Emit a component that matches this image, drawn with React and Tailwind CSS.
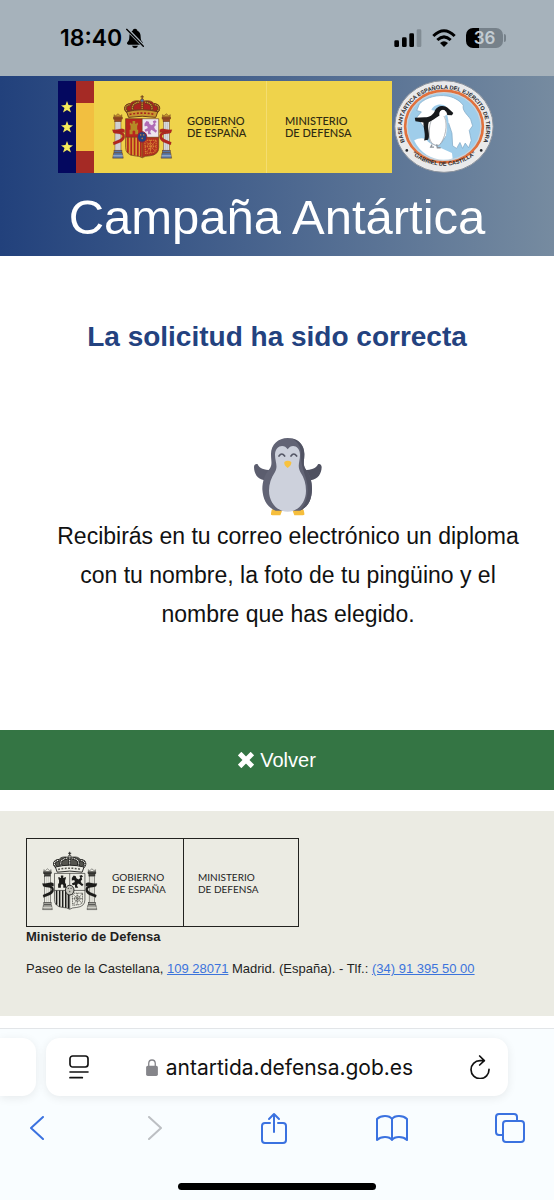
const COLOUR_ARMS = {
  line: '#6b3a1c', crown: '#c9962f', crownCap: '#a8231f', column: '#d8dbe0', base: '#5677a8',
  capital: '#9c4a24', ribbon: '#b3261f', q1: '#b8261f', castle: '#b58a26', q2: '#eee6ee', lion: '#b06cb4',
  q3: '#d9a02e', bars: '#b3261f', q4: '#b3301f', chain: '#d98a34', oval: '#27407f', ovalRim: '#a02030',
};

const MONO_ARMS = {
  line: '#1c1c1a', crown: '#ebebe3', crownCap: '#55554f', column: '#ebebe3', base: '#a5a59e',
  capital: '#44443f', ribbon: '#1c1c1a', q1: '#ebebe3', castle: '#1c1c1a', q2: '#ebebe3', lion: '#1c1c1a',
  q3: '#ebebe3', bars: '#1c1c1a', q4: '#ebebe3', chain: '#55554f', oval: '#c4c4bc', ovalRim: '#1c1c1a',
};

function Pillar({ c }) {
  return (
    <g stroke={c.line} strokeWidth="1.5">
      <path d="M7 66 L6 59 L11 62 L18 56 L25 62 L30 59 L29 66 Z" fill={c.crown} />
      <rect x="5" y="66" width="26" height="6" fill={c.capital} />
      <rect x="8" y="72" width="20" height="8" fill={c.capital} />
      <rect x="9" y="80" width="18" height="88" fill={c.column} />
      <path d="M15 82 V166 M21 82 V166" strokeWidth="1" opacity=".4" />
      <rect x="6" y="166" width="24" height="8" fill={c.base} />
      <path d="M2 190 L5 174 H31 L34 190 Z" fill={c.base} />
      <path d="M3 183 H33" strokeWidth="2" stroke={c.column} />
      <path
        d="M38 104 C30 98 20 104 10 104 L1 104 L4 113 C14 118 22 114 30 120 C34 124 30 130 22 134 L3 142 L5 150 L26 142 C38 136 41 126 37 117 C33 110 20 110 12 109 C24 110 32 112 38 113 Z"
        fill={c.ribbon}
        strokeWidth=".5"
      />
    </g>
  );
}

function CoatOfArms({ c, className }) {
  return (
    <svg viewBox="0 0 184 192" className={className} aria-hidden="true">
      <Pillar c={c} />
      <g transform="matrix(-1 0 0 1 182 0)">
        <Pillar c={c} />
      </g>

      {/* crown */}
      <path d="M47 54 C32 44 36 26 56 25 C62 16 76 15 91 19 C106 15 120 16 126 25 C146 26 150 44 135 54 Z" fill={c.crownCap} stroke={c.line} strokeWidth="2" />
      <g fill="none" stroke={c.line} strokeWidth="8">
        <path d="M50 52 C36 44 38 30 56 28 M68 52 C56 40 60 24 82 21 M114 52 C126 40 122 24 100 21 M132 52 C146 44 144 30 126 28 M91 20 V52" />
      </g>
      <g fill="none" stroke={c.crown} strokeWidth="4" strokeDasharray="4 2">
        <path d="M50 52 C36 44 38 30 56 28 M68 52 C56 40 60 24 82 21 M114 52 C126 40 122 24 100 21 M132 52 C146 44 144 30 126 28 M91 20 V52" />
      </g>
      <path d="M44 50 Q91 38 138 50 L132 67 Q91 60 50 67 Z" fill={c.crown} stroke={c.line} strokeWidth="3" />
      <path d="M53 58 Q91 50 129 58" fill="none" stroke={c.crownCap} strokeWidth="5" strokeDasharray="6 5" />
      <circle cx="91" cy="16" r="5" fill={c.base} stroke={c.line} strokeWidth="2" />
      <path d="M91 0 V12 M86 5 H96" stroke={c.line} strokeWidth="3" />

      {/* shield */}
      <path d="M41 71 H91 V127 H41 Z" fill={c.q1} />
      <path d="M91 71 H141 V127 H91 Z" fill={c.q2} />
      <path d="M41 127 H91 V188 Q83 183 68 183 Q41 180 41 158 Z" fill={c.q3} />
      <path d="M91 127 H141 V158 Q141 180 114 183 Q99 183 91 188 Z" fill={c.q4} />
      <path d="M48 127 V174 M58 127 V181 M68 127 V182 M78 127 V184 M87 127 V186" stroke={c.bars} strokeWidth="5" />
      <path d="M53 118 V104 H56 V91 H54 V83 H58 V86 H62 V78 H70 V86 H74 V83 H78 V91 H76 V104 H79 V118 H70 V109 Q66 104 62 109 V118 Z" fill={c.castle} />
      <path
        d="M98 86 L104 78 L111 80 L113 87 L120 91 L126 86 L123 79 L130 76 L135 81 L130 84 L132 91 L127 96 L130 103 L136 107 L132 113 L124 107 L118 104 L115 111 L119 118 L109 118 L108 108 L101 110 L98 104 L108 99 L106 93 L98 94 Z"
        fill={c.lion}
      />
      <g fill="none" stroke={c.chain} strokeWidth="3" strokeDasharray="4 2">
        <path d="M99 136 H133 V164 Q131 174 116 174 L101 176 Z M99 136 L132 170 M133 136 L102 174 M116 136 V174 M99 154 H133" />
        <circle cx="116" cy="154" r="9" />
      </g>
      <path d="M41 71 H141 V158 Q141 180 114 183 Q99 183 91 189 Q83 183 68 183 Q41 180 41 158 Z M91 71 V188 M41 127 H141" fill="none" stroke={c.line} strokeWidth="2" />
      <ellipse cx="91" cy="126" rx="14" ry="16" fill={c.oval} stroke={c.ovalRim} strokeWidth="3" />
      <path d="M86 120 h1 M95 120 h1 M91 130 v1" stroke={c.chain} strokeWidth="4" strokeLinecap="round" />
    </svg>
  );
}

function Seal() {
  return (
    <svg viewBox="0 0 300 280" className="h-[93px] w-[100px] shrink-0" role="img" aria-label="Base Antártica Gabriel de Castilla">
      <defs>
        <path id="seal-top" d="M50 216 A127 117 0 1 1 250 216" />
        <path id="seal-bottom" d="M30 195 A140 130 0 0 0 270 195" />
      </defs>
      <ellipse cx="150" cy="140" rx="148" ry="138" fill="#e9e9ea" stroke="#8b929c" strokeWidth="3" />
      <ellipse cx="150" cy="140" rx="117" ry="108" fill="#9fcdea" stroke="#e2713c" strokeWidth="8" />
      <ellipse cx="150" cy="140" rx="111" ry="102" fill="none" stroke="#f3d6c8" strokeWidth="2" />
      <path
        d="M76 72 C98 50 134 44 158 48 C176 50 196 60 208 76 C204 92 220 104 230 118 L236 138 L226 152 L232 182 L224 204 L214 190 L206 206 L198 188 L188 206 L176 198 L174 160 L164 130 L158 166 L142 190 L120 196 L108 188 L96 150 L82 132 L68 112 L82 96 L68 92 Z"
        fill="#fff"
        stroke="#7ba4c2"
        strokeWidth="2"
      />
      <path d="M60 182 C76 174 92 172 102 186 C118 198 148 206 174 220 L176 236 C134 248 84 232 60 182 Z" fill="#fff" />
      <path d="M112 90 C120 72 146 70 156 80 L152 106 C162 130 160 170 148 196 L156 196 C168 170 166 120 158 100 Z" fill="#9fcdea" />
      <path d="M118 108 C124 94 144 98 152 112 C162 136 154 176 136 196 C120 200 106 188 106 168 C104 144 108 126 118 108 Z" fill="#fff" stroke="#8c929a" strokeWidth="2" />
      <path
        d="M121 96 C128 74 154 74 165 87 L178 99 L174 106 L158 105 C148 100 140 104 132 110 C122 116 116 122 104 127 C98 144 110 166 102 180 L90 182 C96 166 88 146 88 128 L64 124 L62 114 L92 112 C106 112 114 106 121 96 Z"
        fill="#17191c"
      />
      <path d="M136 106 C134 92 146 84 156 94 L160 104 C150 110 142 112 136 106 Z" fill="#fff" />
      <path d="M132 94 C140 82 154 84 158 94" fill="none" stroke="#17191c" strokeWidth="6" />
      <path d="M114 194 l-4 8 h10 m8 -8 l2 10 h10" fill="none" stroke="#8c929a" strokeWidth="4" />
      <g fill="#24262b" className="font-['Liberation_Sans'] text-[17px] font-bold">
        <text textAnchor="middle">
          <textPath href="#seal-top" startOffset="50%">BASE ANTÁRTICA ESPAÑOLA DEL EJÉRCITO DE TIERRA</textPath>
        </text>
        <text textAnchor="middle">
          <textPath href="#seal-bottom" startOffset="50%">“GABRIEL DE CASTILLA”</textPath>
        </text>
      </g>
      <circle cx="38" cy="212" r="4" fill="#24262b" />
      <circle cx="262" cy="212" r="4" fill="#24262b" />
    </svg>
  );
}

function Penguin() {
  return (
    <svg viewBox="40 34 210 238" className="h-20 w-[70px]" role="img" aria-label="Pingüino">
      <path d="M96 252 Q98 248 108 248 L128 252 L122 268 H98 Q92 268 94 262 Z" fill="#f6be3c" />
      <path d="M192 252 Q190 248 180 248 L158 252 L164 268 H190 Q196 268 194 262 Z" fill="#f6be3c" />
      <path d="M104 132 C80 134 60 130 54 115 C48 112 43 117 43 124 C44 144 52 158 74 163 L100 166 Z" fill="#5b5d6e" />
      <path d="M184 132 C208 134 228 130 235 115 C241 112 246 117 246 124 C245 144 236 158 214 163 L188 166 Z" fill="#4f5160" />
      <path d="M144 36 C116 36 94 56 94 84 C94 106 99 114 90 128 C76 144 68 164 68 190 C70 218 80 244 108 254 H180 C208 244 216 218 217 190 C217 164 210 144 197 128 C189 114 194 106 194 84 C194 56 172 36 144 36 Z" fill="#626475" />
      <path d="M152 36 C178 40 194 58 194 84 C194 106 189 114 197 128 C210 144 217 164 217 190 C216 218 208 244 180 254 C196 240 204 214 204 190 C204 150 182 130 184 84 C184 60 172 44 152 36 Z" fill="#515363" />
      <path d="M144 70 C134 52 106 58 106 86 C106 108 116 118 106 138 C94 156 88 174 88 194 C88 228 112 257 144 257 C176 257 199 228 199 194 C199 174 194 156 182 138 C172 118 181 108 181 86 C181 58 154 52 144 70 Z" fill="#cdd1dc" />
      <path d="M118 90 Q126 78 135 90 M154 90 Q162 78 171 90" fill="none" stroke="#555766" strokeWidth="5" strokeLinecap="round" />
      <path d="M134 108 Q144 100 155 108 Q156 118 144 126 Q132 118 134 108 Z" fill="#f8c23e" />
    </svg>
  );
}

function StatusBar() {
  return (
    <div className="flex h-19 items-center justify-between bg-[#a6b2bb] pr-12 pl-15 text-black">
      <div className="flex items-center gap-1 font-[Inter,sans-serif] text-[23px] font-semibold">
        18:40
        <svg viewBox="0 0 54 60" className="h-5 w-[18px]" aria-label="Silencio">
          <path d="M27 2 C22 2 20 5 20 8 C12 11 10 19 10 27 C10 36 8 38 4 43 C2 46 3 50 7 50 H47 C51 50 52 46 50 43 C46 38 44 36 44 27 C44 19 42 11 34 8 C34 5 32 2 27 2 Z M18 53 H36 Q34 60 27 60 Q20 60 18 53 Z" />
          <path d="M2 2 L54 56" stroke="#a6b2bb" strokeWidth="10" />
          <path d="M2 4 L52 55" stroke="#000" strokeWidth="4" strokeLinecap="round" />
        </svg>
      </div>
      <div className="flex items-center gap-2.5">
        <svg viewBox="0 0 82 54" className="h-[18px] w-[28px]" aria-label="Cobertura">
          <rect x="0" y="34" width="14" height="20" rx="4" />
          <rect x="23" y="25" width="14" height="29" rx="4" />
          <rect x="45" y="13" width="14" height="41" rx="4" />
          <rect x="67" y="1" width="14" height="53" rx="4" fill="#818c94" />
        </svg>
        <svg viewBox="0 0 72 54" className="h-[18px] w-6" aria-label="Wifi">
          <g fill="none" stroke="#000" strokeWidth="9">
            <path d="M4 21 Q36 -11 68 21" />
            <path d="M16 33 Q36 14 56 33" />
          </g>
          <path d="M24 42 Q36 31 48 42 L36 54 Z" />
        </svg>
        <div className="flex items-center gap-px">
          <div className="flex h-5 w-[37px] items-center justify-center rounded-[7px] bg-linear-to-r from-black from-36% to-[#76818a] to-36% font-[Inter,sans-serif] text-[17px] leading-5 font-semibold text-[#c3ccd2]">
            36
          </div>
          <div className="h-2 w-0.5 rounded-r bg-[#76818a]" />
        </div>
      </div>
    </div>
  );
}

function Star() {
  return (
    <svg viewBox="0 0 24 24" className="size-3" fill="#f4e95a">
      <path d="M12 0 L15 8 L24 9 L17 14 L20 23 L12 18 L4 23 L7 14 L0 9 L9 8 Z" />
    </svg>
  );
}

function Header() {
  return (
    <header className="bg-linear-to-r from-[#22417c] to-[#768ba0] pt-1 pb-3">
      <div className="flex items-center justify-center gap-0.5 pr-0.5">
        <div className="flex h-23 w-[334px] bg-[#efd34b] font-[Lato,sans-serif] text-[11px] leading-3 font-medium text-[#2e2a12]">
          <div className="flex w-[18px] flex-col items-center justify-center gap-2 bg-[#04085f]">
            <Star />
            <Star />
            <Star />
          </div>
          <div className="flex w-[18px] flex-col bg-[#a52a25]">
            <div className="my-auto h-12 bg-[#f2bf40]" />
          </div>
          <div className="flex flex-1 items-center border-r border-[#f4dd70] pl-[18px]">
            <CoatOfArms c={COLOUR_ARMS} className="h-16 w-[61px]" />
            <p className="ml-3.5">GOBIERNO<br />DE ESPAÑA</p>
          </div>
          <p className="w-[125px] self-center pl-[18px]">MINISTERIO<br />DE DEFENSA</p>
        </div>
        <Seal />
      </div>
      <h1 className="mt-[17px] text-center text-[49px] leading-[54px] text-white">Campaña Antártica</h1>
    </header>
  );
}

function Footer() {
  return (
    <footer className="mt-[21px] bg-[#ebebe3] px-[26px] pt-[27px] pb-[37px] text-[13px] text-[#1f1f1f]">
      <div className="flex h-[89px] w-[273px] items-stretch border border-[#22221f] font-[Lato,sans-serif] text-[10px] leading-3">
        <div className="flex w-[157px] items-center border-r border-[#22221f] pl-[15px]">
          <CoatOfArms c={MONO_ARMS} className="mb-1 h-15 w-14" />
          <p className="ml-3.5">GOBIERNO<br />DE ESPAÑA</p>
        </div>
        <p className="self-center pl-3.5">MINISTERIO<br />DE DEFENSA</p>
      </div>
      <p className="leading-5 font-bold">Ministerio de Defensa</p>
      <p className="mt-3 leading-5">
        Paseo de la Castellana,{' '}
        <a href="tel:10928071" className="text-[#3c74dc] underline">109 28071</a> Madrid. (España). - Tlf.:{' '}
        <a href="tel:+34913955000" className="text-[#3c74dc] underline">(34) 91 395 50 00</a>
      </p>
    </footer>
  );
}

function BrowserBar() {
  const button = 'flex h-9 w-8 items-center justify-center';
  return (
    <div className="mt-3 border-t border-[#e2e5e8] bg-[#f9fdff] pt-[9px] pb-[10px]">
      <div className="flex gap-2.5 pr-[46px]">
        <div className="w-9 rounded-r-[14px] bg-white shadow-[0_2px_10px_#00000014]" />
        <div className="flex h-[58px] min-w-0 flex-1 items-center justify-between rounded-[14px] bg-white pr-3 pl-[17px] shadow-[0_2px_10px_#00000014]">
          <button type="button" aria-label="Opciones de página" className={button}>
            <svg viewBox="0 0 60 72" className="h-6 w-5" fill="none" stroke="#111" strokeWidth="5" strokeLinecap="round">
              <rect x="3" y="3" width="54" height="33" rx="8" />
              <path d="M3 51 H57 M3 68 H40" />
            </svg>
          </button>
          <div className="flex min-w-0 items-center gap-2">
            <label htmlFor="address" aria-label="Dirección">
              <svg viewBox="0 0 36 52" className="h-[17px] w-3 shrink-0" fill="#85858a">
                <rect y="21" width="36" height="31" rx="5" />
                <path d="M8 23 V14 Q8 3 18 3 Q28 3 28 14 V23" fill="none" stroke="#85858a" strokeWidth="4" />
              </svg>
            </label>
            <input
              id="address"
              type="text"
              readOnly
              value="antartida.defensa.gob.es"
              className="field-sizing-content h-9 font-[Inter,sans-serif] text-[21px] text-[#111] outline-none"
            />
          </div>
          <button type="button" aria-label="Recargar" className={button}>
            <svg viewBox="0 0 60 72" className="h-6 w-5 shrink-0" fill="none" stroke="#111" strokeWidth="5" strokeLinecap="round" strokeLinejoin="round">
              <path d="M43 17 H30 A27 27 0 1 0 57 43 M29 3 L43 17 L29 30" />
            </svg>
          </button>
        </div>
      </div>
      <nav className="mt-3.5 flex justify-between pr-7 pl-[21px] text-[#3b72e0]">
        <button type="button" aria-label="Atrás" className={button}>
          <svg viewBox="0 0 14 24" className="h-6 w-3.5" fill="none" stroke="currentColor" strokeWidth="2" strokeLinecap="round" strokeLinejoin="round">
            <path d="M13 1 L1 12 L13 23" />
          </svg>
        </button>
        <button type="button" aria-label="Adelante" className={button}>
          <svg viewBox="0 0 14 24" className="h-6 w-3.5" fill="none" stroke="#bcbfc3" strokeWidth="2" strokeLinecap="round" strokeLinejoin="round">
            <path d="M1 1 L13 12 L1 23" />
          </svg>
        </button>
        <button type="button" aria-label="Compartir" className={button}>
          <svg viewBox="0 0 26 32" className="h-8 w-[26px]" fill="none" stroke="currentColor" strokeWidth="2" strokeLinecap="round" strokeLinejoin="round">
            <path d="M9 11 H4 Q1 11 1 14 V28 Q1 31 4 31 H22 Q25 31 25 28 V14 Q25 11 22 11 H17 M13 20 V2 M8 7 L13 2 L18 7" />
          </svg>
        </button>
        <button type="button" aria-label="Marcadores" className={button}>
          <svg viewBox="0 0 32 26" className="h-[26px] w-8" fill="none" stroke="currentColor" strokeWidth="2" strokeLinejoin="round">
            <path d="M16 25 V4 Q14 1 9 1 Q4 1 1 4 V25 Q4 22 9 22 Q14 22 16 25 Q18 22 23 22 Q28 22 31 25 V4 Q28 1 23 1 Q18 1 16 4" />
          </svg>
        </button>
        <button type="button" aria-label="Pestañas" className={button}>
          <svg viewBox="0 0 30 30" className="size-[30px]" fill="none" stroke="currentColor" strokeWidth="2">
            <path d="M8 22 H4 Q1 22 1 19 V4 Q1 1 4 1 H19 Q22 1 22 4 V8" />
            <rect x="8" y="8" width="21" height="21" rx="3" />
          </svg>
        </button>
      </nav>
      <div className="mx-auto mt-[37px] h-[7px] w-[198px] rounded-full bg-black" />
    </div>
  );
}

export default function App() {
  return (
    <div className="min-h-screen bg-white font-['Liberation_Sans',Arial,sans-serif] text-[#111]">
      <StatusBar />
      <Header />
      <main>
        <h2 className="mt-[61px] text-center text-[28px] leading-10 font-bold text-[#23427f]">La solicitud ha sido correcta</h2>
        <div className="mt-20 flex flex-col items-center pr-5 pl-[42px] text-center">
          <Penguin />
          <p className="text-[23px] leading-[39px]">
            Recibirás en tu correo electrónico un diploma con tu nombre, la foto de tu pingüino y el nombre que has elegido.
          </p>
        </div>
        <button type="button" className="mt-24 flex h-15 w-full items-center justify-center gap-1.5 bg-[#347544] text-[20px] text-white">
          <svg viewBox="0 0 48 48" className="size-4">
            <path d="M10 10 L38 38 M38 10 L10 38" stroke="#fff" strokeWidth="15" strokeLinecap="square" strokeLinejoin="round" />
          </svg>
          Volver
        </button>
      </main>
      <Footer />
      <BrowserBar />
    </div>
  );
}
